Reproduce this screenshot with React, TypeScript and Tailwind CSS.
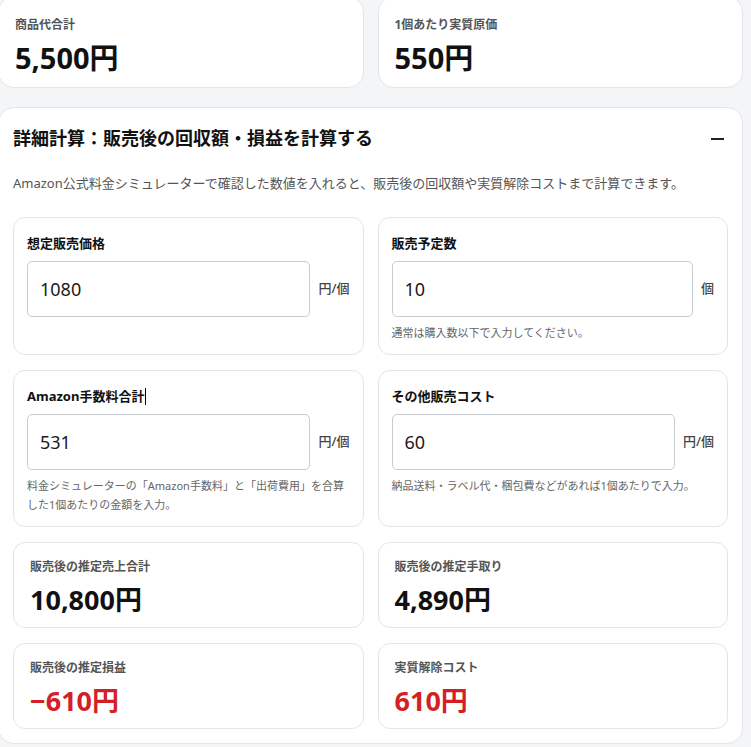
import React from "react";

type Tone = "default" | "danger";

interface StatProps {
  label: string;
  value: string;
  tone?: Tone;
}

// 上段のサマリーカード
function SummaryCard({ label, value }: StatProps) {
  return (
    <div className="rounded-2xl border border-[#e3e5e8] bg-white px-4 pt-[19px] pb-[11px]">
      <p className="text-[12px] font-bold leading-[18px] text-[#555]">{label}</p>
      <p className="mt-[6px] text-[29px] font-bold leading-[36px] text-[#111]">
        {value}
      </p>
    </div>
  );
}

// 詳細計算の結果カード
function ResultCard({ label, value, tone = "default" }: StatProps) {
  return (
    <div className="rounded-xl border border-[#e3e5e8] bg-white px-4 pt-[15px] pb-[9px]">
      <p className="text-[12px] font-bold leading-[18px] text-[#555]">{label}</p>
      <p
        className={
          tone === "danger"
            ? "mt-[6px] text-[27px] font-bold leading-[36px] text-[#d41f26]"
            : "mt-[6px] text-[27px] font-bold leading-[36px] text-[#111]"
        }
      >
        {value}
      </p>
    </div>
  );
}

interface FieldProps {
  label: React.ReactNode;
  value: string;
  unit: string;
  hint?: string;
}

function NumberField({ label, value, unit, hint }: FieldProps) {
  return (
    <div className="rounded-xl border border-[#e3e5e8] bg-white px-[13px] pt-[15px] pb-[12px]">
      <label className="block text-[13px] font-bold leading-[20px] text-[#111]">
        {label}
      </label>
      <div className="mt-[8px] flex items-center gap-2">
        <input
          type="text"
          inputMode="numeric"
          defaultValue={value}
          className="h-[56px] min-w-0 flex-1 rounded-[5px] border border-[#c9ccd1] bg-white px-3 text-[18px] text-[#1a1a1a] outline-none"
        />
        <span className="shrink-0 text-[13px] font-medium text-[#444]">{unit}</span>
      </div>
      {hint && (
        <p className="mt-[6px] text-[11px] leading-[19px] text-[#666]">{hint}</p>
      )}
    </div>
  );
}

export default function App() {
  return (
    <div className="flex min-h-screen flex-col bg-[#f4f5f7] font-['Noto_Sans','Noto_Sans_CJK_JP',sans-serif]">
      <div className="-mt-[4px] -ml-[2px] w-[745px]">
        <div className="grid grid-cols-2 gap-x-[14px]">
          <SummaryCard label="商品代合計" value="5,500円" />
          <SummaryCard label="1個あたり実質原価" value="550円" />
        </div>

        <section className="mt-[19px] rounded-2xl border border-[#e3e5e8] bg-white px-[14px] pt-[17px] pb-[14px]">
          <div className="flex items-center justify-between">
            <h2 className="text-[18px] font-bold leading-[27px] text-[#111]">
              詳細計算：販売後の回収額・損益を計算する
            </h2>
            <button type="button" aria-label="閉じる" className="mr-[4px] flex h-[20px] w-[13px] items-center">
              <span className="block h-[2px] w-[13px] bg-[#222]" />
            </button>
          </div>
          <p className="mt-[21px] text-[13px] leading-[20px] text-[#555]">
            Amazon公式料金シミュレーターで確認した数値を入れると、販売後の回収額や実質解除コストまで計算できます。
          </p>

          <div className="mt-[24px] grid grid-cols-2 gap-x-[14px] gap-y-[15px]">
            <NumberField label="想定販売価格" value="1080" unit="円/個" />
            <NumberField
              label="販売予定数"
              value="10"
              unit="個"
              hint="通常は購入数以下で入力してください。"
            />
            <NumberField
              label={
                <>
                  Amazon手数料合計
                  <span className="ml-px inline-block h-[17px] w-px bg-black align-[-4px]" />
                </>
              }
              value="531"
              unit="円/個"
              hint="料金シミュレーターの「Amazon手数料」と「出荷費用」を合算した1個あたりの金額を入力。"
            />
            <NumberField
              label="その他販売コスト"
              value="60"
              unit="円/個"
              hint="納品送料・ラベル代・梱包費などがあれば1個あたりで入力。"
            />
            <ResultCard label="販売後の推定売上合計" value="10,800円" />
            <ResultCard label="販売後の推定手取り" value="4,890円" />
            <ResultCard label="販売後の推定損益" value="−610円" tone="danger" />
            <ResultCard label="実質解除コスト" value="610円" tone="danger" />
          </div>
        </section>
      </div>
    </div>
  );
}
